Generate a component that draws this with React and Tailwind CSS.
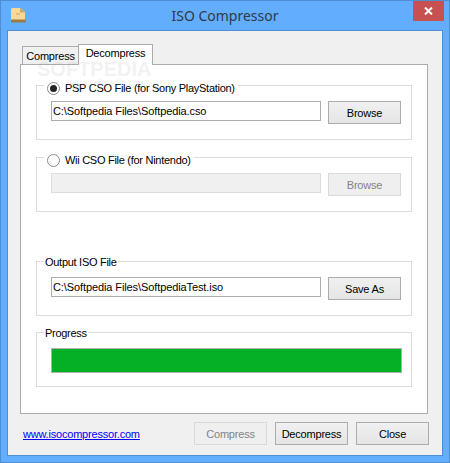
const font = "font-['Liberation_Sans',Arial,sans-serif]"

function Group({ legend, legendClass, children }) {
  return (
    <div className="relative h-[55px] border border-[#dcdcdc] pt-[15px] pl-[14px] flex items-start gap-[7px]">
      <div className={`absolute bg-white text-[11px] leading-[16px] tracking-[-0.28px] text-black ${legendClass}`}>{legend}</div>
      {children}
    </div>
  )
}

function Radio({ checked }) {
  return (
    <span className="w-[13px] h-[13px] rounded-full border border-[#8a8a8a] bg-white flex items-center justify-center">
      {checked && <span className="w-[7px] h-[7px] rounded-full bg-[#222]" />}
    </span>
  )
}

function Field({ value, disabled }) {
  return (
    <div className={`w-[270px] h-[20px] border px-[1px] text-[11px] leading-[18px] tracking-[-0.1px] text-black ${disabled ? 'border-[#dcdcdc] bg-[#f0f0f0]' : 'border-[#adadad] bg-white'}`}>
      {value}
    </div>
  )
}

function Btn({ children, disabled }) {
  return (
    <button
      disabled={disabled}
      className={`w-[73px] h-[23px] border text-[11px] leading-[20px] tracking-[-0.2px] text-center ${disabled ? 'border-[#d9d9d9] bg-[#efefef] text-[#838383]' : 'border-[#acacac] bg-gradient-to-b from-[#f0f0f0] to-[#e5e5e5] text-black'}`}
    >
      {children}
    </button>
  )
}

export default function App() {
  return (
    <div className={`w-[450px] h-[463px] flex flex-col border border-[#4d8fd0] bg-[#62adfe] ${font}`}>
      {/* title bar */}
      <div className="h-[29px] grid grid-cols-[1fr_auto_1fr]">
        <div className="pl-[9px] pt-[6px]">
          <svg width="17" height="17" viewBox="0 0 17 17">
            <path d="M1 2.5Q1 1 2.5 1H10L15 5V13H1Z" fill="#f6d998" />
            <path d="M10 1L15 5.5H10Z" fill="#cfa964" />
            <rect x="1" y="12.5" width="15" height="3" rx="1" fill="#9c7c3c" />
            <rect x="6" y="6" width="4" height="2" fill="#e2bd78" />
          </svg>
        </div>
        <div className="font-['Noto_Sans',sans-serif] text-[14px] leading-[30px] text-[#2f3a46]">ISO Compressor</div>
        <div className="flex justify-end pr-[5px]">
          <div className="w-[31px] h-[20px] bg-[#c75050] flex items-center justify-center">
            <svg width="9" height="8" viewBox="0 0 9 8">
              <path d="M1 0.5L8 7.5M8 0.5L1 7.5" stroke="#fff" strokeWidth="2" />
            </svg>
          </div>
        </div>
      </div>

      {/* client area */}
      <div className="relative flex-1 mx-[6px] mb-[6px] border border-[#4d8fd0] bg-[#f0f0f0] flex flex-col pt-[13px]">
        <div className="flex items-end pl-[14px] h-[20px] text-[11px] tracking-[-0.2px] text-black">
          <div className="w-[57px] h-[18px] border border-b-0 border-[#acacac] bg-[#f0f0f0] text-center leading-[19px]">Compress</div>
          <div className="relative z-10 -ml-[1px] -mb-[1px] w-[75px] h-[21px] border border-b-0 border-[#acacac] bg-white text-center leading-[17px]">Decompress</div>
        </div>

        <div className="ml-[12px] w-[408px] h-[350px] border border-[#acacac] bg-white px-[15px] pt-[20px]">
          <Group
            legendClass="-top-[6px] left-[7px] flex items-center gap-[3px] px-[3px]"
            legend={<><Radio checked /><span className="ml-[2px]">PSP CSO File (for Sony PlayStation)</span></>}
          >
            <Field value="C:\Softpedia Files\Softpedia.cso" />
            <Btn>Browse</Btn>
          </Group>
          <div className="h-[17px]" />
          <Group
            legendClass="-top-[6px] left-[7px] flex items-center gap-[3px] px-[3px]"
            legend={<><Radio /><span className="ml-[2px]">Wii CSO File (for Nintendo)</span></>}
          >
            <Field disabled />
            <Btn disabled>Browse</Btn>
          </Group>
          <div className="h-[49px]" />
          <Group legendClass="-top-[8px] left-[7px] px-[1px]" legend="Output ISO File">
            <Field value="C:\Softpedia Files\SoftpediaTest.iso" />
            <Btn>Save As</Btn>
          </Group>
          <div className="h-[16px]" />
          <Group legendClass="-top-[8px] left-[7px] px-[1px]" legend="Progress">
            <div className="w-[351px] h-[25px] border border-[#b0b0b0] bg-[#06b025]" />
          </Group>
        </div>

        {/* footer */}
        <div className="flex items-start pt-[8px] pl-[15px] pr-[13px] text-[11px] tracking-[-0.2px]">
          <a href="#" className="mt-[4px] flex-1 text-[#0000ff] underline leading-[16px]">www.isocompressor.com</a>
          <div className="flex gap-[8px]">
            <Btn disabled>Compress</Btn>
            <Btn>Decompress</Btn>
            <Btn>Close</Btn>
          </div>
        </div>

        {/* softpedia watermark */}
        <div className="absolute z-20 left-[29px] top-[28px] text-[20px] leading-[20px] font-bold text-[#9a9a9a]/15 pointer-events-none">SOFTPEDIA</div>
        <div className="absolute z-20 left-[60px] top-[47px] text-[9px] leading-[10px] text-[#9a9a9a]/20 pointer-events-none">www.softpedia.com</div>
      </div>
    </div>
  )
}
